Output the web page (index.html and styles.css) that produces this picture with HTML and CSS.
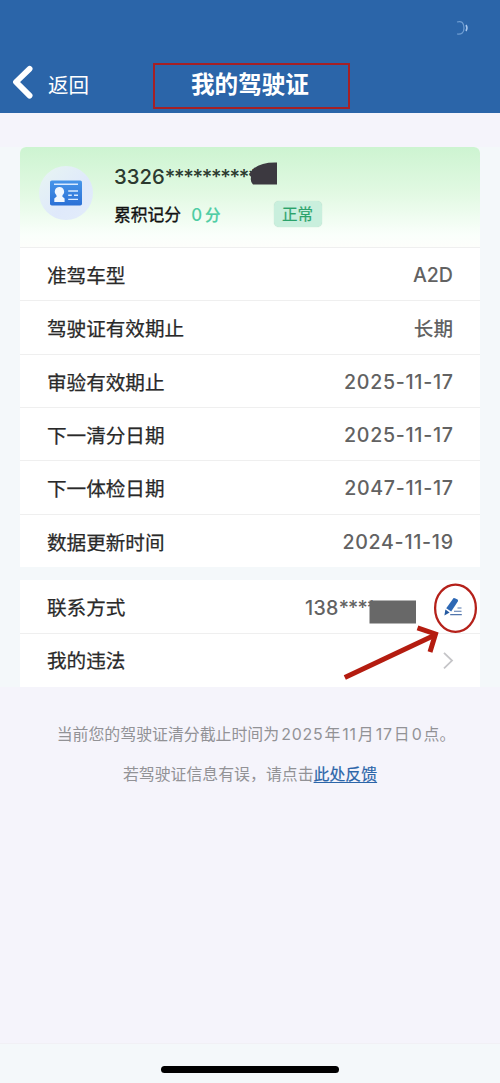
FILE: index.html
```
<!DOCTYPE html>
<html lang="zh-CN">
<head>
<meta charset="utf-8">
<title>我的驾驶证</title>
<link rel="stylesheet" href="styles.css">
</head>
<body>
<div class="screen">
  <header class="topbar">
    <svg class="status-mark" width="16" height="18" viewBox="0 0 16 18"><path d="M3 3 Q10 1 10 9 Q10 16 3 15" fill="none" stroke="#6f9dd2" stroke-width="1.2"/><path d="M12 6 Q14 9 12 12" fill="none" stroke="#a9c8ee" stroke-width="1.5"/></svg>
    <svg class="back-icon" width="24" height="36" viewBox="0 0 24 36"><path d="M19.6 4.8 L6 18 L19.6 31.6" fill="none" stroke="#fff" stroke-width="5.8" stroke-linecap="round" stroke-linejoin="round"/></svg>
    <span class="back-text">返回</span>
    <h1 class="title">我的驾驶证</h1>
    <div class="title-frame"></div>
  </header>
  <main class="content">
    <section class="card card-top">
      <div class="summary">
        <div class="avatar">
          <svg width="32" height="26" viewBox="0 0 32 26">
            <defs><linearGradient id="cardBlue" x1="0" y1="0" x2="0" y2="1"><stop offset="0" stop-color="#4795e9"/><stop offset="1" stop-color="#2b70d6"/></linearGradient></defs>
            <rect x="0" y="0.5" width="32" height="25" rx="1.8" fill="url(#cardBlue)"/>
            <path d="M4 4.3H28" stroke="#d9eaff" stroke-width="1.5"/>
            <path d="M9.6 7a4.6 4.6 0 0 1 3 8l-.3 1.6 2.3 1.9V22H4.3v-3.5l2.4-1.9-.4-1.6a4.6 4.6 0 0 1 3.3-8z" fill="#f1f7ff"/>
            <path d="M18.2 11H28M18.2 15.2h3.6M24 15.2h4M18.2 19.4H28" stroke="#d9eaff" stroke-width="1.4"/>
          </svg>
        </div>
        <div class="summary-text">
          <div class="number">3326<span class="stars">**********</span></div>
          <div class="score"><span>累积记分</span><span class="points">0<i>分</i></span><span class="badge">正常</span></div>
        </div>
        <svg class="smudge" width="29" height="23" viewBox="0 0 29 23"><path d="M0 12 L4 7 Q12 0 28 .5 V22.5 H4 Q1 20 2 15z" fill="#3c3940"/></svg>
      </div>
      <div class="row"><span class="label">准驾车型</span><span class="value">A2D</span></div>
      <div class="row"><span class="label">驾驶证有效期止</span><span class="value term">长期</span></div>
      <div class="row"><span class="label">审验有效期止</span><span class="value date">2025-11-17</span></div>
      <div class="row"><span class="label">下一清分日期</span><span class="value date">2025-11-17</span></div>
      <div class="row"><span class="label">下一体检日期</span><span class="value date">2047-11-17</span></div>
      <div class="row"><span class="label">数据更新时间</span><span class="value date">2024-11-19</span></div>
    </section>
    <section class="card card-links">
      <div class="row"><span>联系方式</span><span class="value phone">138<span class="phone-stars">****</span></span></div>
      <div class="row"><span>我的违法</span><svg class="chevron" width="12" height="20" viewBox="0 0 12 20"><path d="M2 1.8 L10 9.6 L2 17.3" fill="none" stroke="#c5c5c8" stroke-width="1.8"/></svg></div>
      <svg class="marks" width="160" height="106" viewBox="320 580 160 106">
        <rect x="369.5" y="600.5" width="46.5" height="23" fill="#686868"/>
        <ellipse cx="455.5" cy="608.3" rx="20.4" ry="23.6" fill="none" stroke="#b5211a" stroke-width="2.3"/>
        <path d="M344.8 677.5 L435 635" stroke="#b41c10" stroke-width="5" fill="none"/>
        <path d="M417.5 627.8 L435.5 634 L430 652" stroke="#b41c10" stroke-width="5" fill="none"/>
        <path d="M453.6 598 Q454.6 597.6 457.6 599.6 Q458.4 600.4 457.8 601.4 L451.2 611.6 L446.2 608.3z" fill="#2d68b4"/>
        <path d="M445.4 609.6 L449.6 612.4 L444.4 615.4z" fill="#2459a0"/>
        <path d="M457.5 608H461.5M454 611.3H461.5M450.2 614.6H461.8" stroke="#5276ac" stroke-width="1.1"/>
      </svg>
    </section>
  </main>
  <footer class="notes">
    <p class="first">当前您的驾驶证清分截止时间为<b>2025</b>年<b>11</b>月<b>17</b>日<b>0</b>点。</p>
    <p class="second">若驾驶证信息有误，请点击<a class="link">此处反馈</a></p>
  </footer>
  <div class="homebar"><div class="handle"></div></div>
</div>
</body>
</html>
```
FILE: styles.css
```
* { box-sizing: border-box; }
body { margin: 0; font-family: Inter, "Noto Sans CJK SC", sans-serif; }
.screen { width: 500px; height: 1083px; display: flex; flex-direction: column; background: #f5f4fb; overflow: hidden; }
.topbar { position: relative; height: 113px; flex: none; background: #2b65a9; color: #fff; display: flex; align-items: flex-start; padding: 64px 0 0 10px; }
.back-icon { flex: none; }
.back-text { font-size: 20.5px; line-height: 30px; margin: 7px 0 0 14px; }
.title { margin: 6px 0 0 102px; font-size: 23.6px; line-height: 30px; font-weight: 700; white-space: nowrap; }
.title-frame { position: absolute; left: 153px; top: 63px; width: 197px; height: 46px; border: 2.5px solid #a52025; }
.status-mark { position: absolute; left: 454px; top: 19px; }
.content { margin-top: 34px; padding: 0 20px; background: #f4f8fa; flex: none; }
.card { background: #fff; position: relative; }
.card-top { border-radius: 6px 6px 0 0; overflow: hidden; }
.summary { height: 100px; position: relative; display: flex; padding: 19px 0 0 19px; background: linear-gradient(180deg, #cdf4d1 0%, #e1f9e2 45%, #fafffb 88%, #fdfefb 100%); }
.avatar { width: 54px; height: 54px; border-radius: 50%; background: linear-gradient(135deg, #e8f5f2, #dfe9fb 60%, #e3edfa); display: flex; align-items: center; justify-content: center; }
.summary-text { margin-left: 21px; margin-top: -2px; }
.number { font-size: 20.3px; line-height: 26px; font-weight: 500; color: #2c3a30; white-space: nowrap; }
.stars { letter-spacing: -1.3px; }
.score { display: flex; align-items: center; height: 27px; margin-top: 10px; font-size: 16.8px; color: #111; -webkit-text-stroke: .35px; }
.points { margin-left: 10px; color: #4fcda4; font-weight: 500; -webkit-text-stroke: 0; }
.points i { font-style: normal; margin-left: 3px; font-size: 15.5px; -webkit-text-stroke: .2px; }
.badge { width: 48px; height: 26px; margin-left: 53px; border-radius: 5px; background: #c9efdd; box-shadow: 0 0 1px #a9cfbf; color: #2ba36b; font-size: 15.5px; line-height: 27px; text-align: center; -webkit-text-stroke: .2px; }
.smudge { position: absolute; left: 229px; top: 15px; }
.row { height: 53.33px; display: flex; align-items: center; justify-content: space-between; padding: 2px 27px 0; font-size: 19.6px; line-height: 28px; color: #292929; border-top: 1px solid #efefef; -webkit-text-stroke: .25px; }
.label, .term { padding-top: 2px; }
.value { color: #626262; font-weight: 500; -webkit-text-stroke: 0; }
.date { letter-spacing: .7px; margin-right: -.7px; }
.card-links { margin-top: 13px; }
.card-links .row:first-child { border-top: 0; }
.phone { width: 91px; margin-right: 57px; letter-spacing: .3px; }
.phone-stars { letter-spacing: -.8px; }
.chevron { margin-right: -1px; }
.marks { position: absolute; left: 300px; top: 0; }
.notes { margin-top: 36px; text-align: center; color: #929296; font-size: 15.9px; line-height: 24px; flex: 1; }
.notes p { margin: 0; white-space: nowrap; }
.notes .first { padding-left: 12px; }
.notes b { font-weight: 400; letter-spacing: .8px; margin: 0 1px 0 2px; }
.notes .second { margin-top: 16px; }
.link { color: #2b65a9; text-decoration: underline; text-decoration-thickness: 1px; text-underline-offset: 2px; -webkit-text-stroke: .2px; }
.homebar { flex: none; height: 40px; background: #f4f8fa; border-top: 1px solid #f1f0f5; display: flex; justify-content: center; padding-top: 22px; }
.handle { width: 178px; height: 7px; border-radius: 4px; background: #000; }
```
